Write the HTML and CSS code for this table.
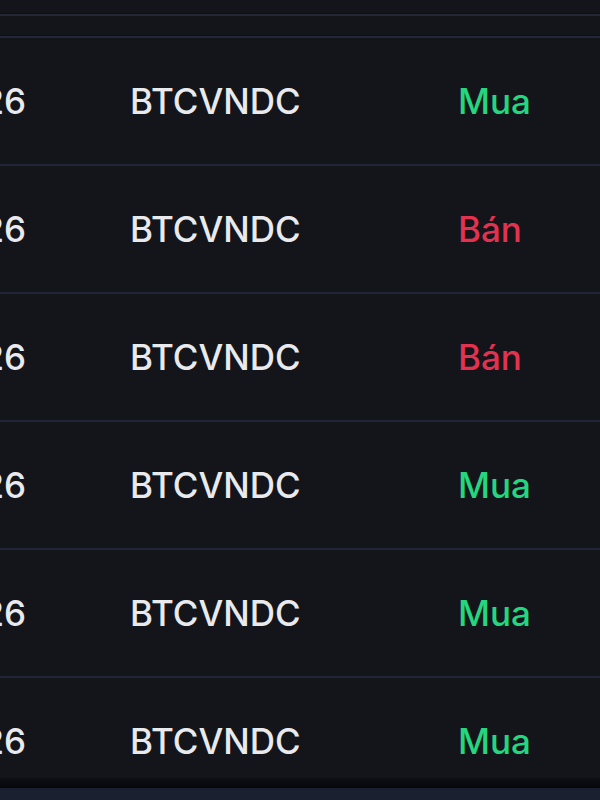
FILE: index.html
```html
<!DOCTYPE html>
<html lang="vi">
<head>
<meta charset="utf-8">
<link rel="stylesheet" href="styles.css">
</head>
<body>
<div class="page">
  <div class="table">
    <div class="strip strip-a"></div>
    <div class="strip strip-b"></div>
    <div class="row"><div class="cell date"><span>26</span></div><div class="cell pair">BTCVNDC</div><div class="cell side buy">Mua</div></div>
    <div class="row"><div class="cell date"><span>26</span></div><div class="cell pair">BTCVNDC</div><div class="cell side sell">Bán</div></div>
    <div class="row"><div class="cell date"><span>26</span></div><div class="cell pair">BTCVNDC</div><div class="cell side sell">Bán</div></div>
    <div class="row"><div class="cell date"><span>26</span></div><div class="cell pair">BTCVNDC</div><div class="cell side buy">Mua</div></div>
    <div class="row"><div class="cell date"><span>26</span></div><div class="cell pair">BTCVNDC</div><div class="cell side buy">Mua</div></div>
    <div class="row last"><div class="cell date"><span>26</span></div><div class="cell pair">BTCVNDC</div><div class="cell side buy">Mua</div></div>
  </div>
  <div class="footer">
    <div class="footer-shadow"></div>
    <div class="footer-bar"></div>
  </div>
</div>
</body>
</html>
```
FILE: styles.css
```css
html, body {
  margin: 0;
  padding: 0;
  background: #14151a;
}
.page {
  width: 600px;
  height: 800px;
  display: flex;
  flex-direction: column;
  font-family: Inter, "Noto Sans", sans-serif;
  font-weight: 500;
  color: #e9eaee;
  overflow: hidden;
}
.table {
  flex: 1;
  overflow: hidden;
  display: flex;
  flex-direction: column;
}
.strip {
  flex: none;
  border-bottom: 2px solid #222836;
  box-shadow: inset 0 -1px 0 #0c0f16;
}
.strip-a { height: 14px; }
.strip-b { height: 20px; }
.row {
  flex: none;
  height: 126px;
  border-bottom: 2px solid #202634;
  display: flex;
  align-items: center;
  font-size: 35px;
  line-height: 1;
}
.date {
  flex: none;
  width: 26px;
  display: flex;
  justify-content: flex-end;
  white-space: nowrap;
}
.date span { margin-left: -30px; }
.pair {
  flex: none;
  width: 328px;
  margin-left: 104px;
}
.side { flex: none; }
.buy { color: #24d680; }
.sell { color: #e3324f; }
.footer {
  flex: none;
  height: 22px;
  display: flex;
  flex-direction: column;
}
.footer-shadow {
  height: 10px;
  background: linear-gradient(#0e1015, #05070b);
}
.footer-bar {
  flex: 1;
  background: #1a2030;
}
```
